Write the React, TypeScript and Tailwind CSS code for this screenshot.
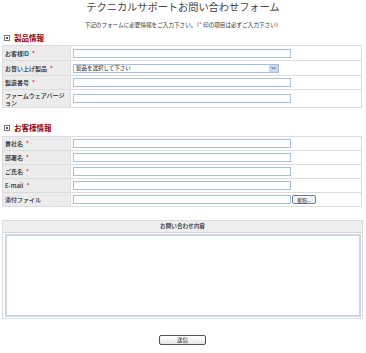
const jp = "font-['Noto_Sans_CJK_JP','Noto_Sans',sans-serif]";

function Req() {
  return <span className="ml-[3px] text-[#e02020]">*</span>;
}

function SectionHead({ title, className }: { title: string; className?: string }) {
  return (
    <div className={`flex h-[9px] items-center pl-[4px] ${className ?? ""}`}>
      <span className="relative mr-[4px] h-[6px] w-[6px] border border-[#777] bg-white">
        <span className="absolute left-[1px] top-[1px] h-[2px] w-[2px] bg-[#555]" />
      </span>
      <span className="text-[7.5px] font-bold leading-[9px] text-[#8c0000]">{title}</span>
    </div>
  );
}

function TextInput({ w = "w-[218px]" }: { w?: string }) {
  return <div className={`h-[9px] ${w} border border-[#a9bdd6] bg-white`} />;
}

function Row({ label, req, h, children }: { label: string; req?: boolean; h: string; children: React.ReactNode }) {
  return (
    <div className={`grid ${h} grid-cols-[67px_1fr] border-b border-[#dcdcdc]`}>
      <div className="flex items-center bg-[#ececec] px-[2px] text-[6px] font-medium leading-[7px] text-[#222]">
        <span>
          {label}
          {req && <Req />}
        </span>
      </div>
      <div className="flex items-center border-l border-[#dcdcdc] pl-[2px]">{children}</div>
    </div>
  );
}

export default function App() {
  return (
    <div className={`h-[353px] w-[366px] overflow-hidden bg-white ${jp} text-[#333]`}>
      <h1 className="mt-[1px] h-[12px] text-center text-[10.2px] leading-[12px] text-[#444]">
        テクニカルサポートお問い合わせフォーム
      </h1>
      <p className="mt-[8px] h-[8px] text-center text-[5.6px] leading-[8px] text-[#333]">
        下記のフォームに必要情報をご入力下さい。（<span className="text-[#e02020]">*</span> 印の項目は必ずご入力下さい）
      </p>

      <SectionHead title="製品情報" className="mt-[4px]" />
      <div className="mx-[2px] mt-[3px] w-[360px] border-t border-x border-[#dcdcdc]">
        <Row label="お客様ID" req h="h-[15px]">
          <TextInput />
        </Row>
        <Row label="お買い上げ製品" req h="h-[15px]">
          <div className="flex h-[9px] w-[206px] items-center border border-[#a9bdd6] bg-white">
            <span className="flex-1 pl-[2px] text-[5.5px] leading-[7px] text-[#222]">製品を選択して下さい</span>
            <span className="flex h-full w-[9px] items-center justify-center bg-[#c9d8ee]">
              <svg width="5" height="4" viewBox="0 0 5 4">
                <path d="M0.5 1 L2.5 3 L4.5 1" fill="none" stroke="#4a5f80" strokeWidth="1" />
              </svg>
            </span>
          </div>
        </Row>
        <Row label="製造番号" req h="h-[14px]">
          <TextInput />
        </Row>
        <Row label="ファームウェアバージョン" h="h-[18px]">
          <TextInput />
        </Row>
      </div>

      <SectionHead title="お客様情報" className="mt-[15px]" />
      <div className="mx-[2px] mt-[4px] w-[360px] border-t border-x border-[#dcdcdc]">
        <Row label="貴社名" req h="h-[14px]">
          <TextInput />
        </Row>
        <Row label="部署名" req h="h-[14px]">
          <TextInput />
        </Row>
        <Row label="ご氏名" req h="h-[14px]">
          <TextInput />
        </Row>
        <Row label="E-mail" req h="h-[14px]">
          <TextInput />
        </Row>
        <Row label="添付ファイル" h="h-[14px]">
          <TextInput />
          <div className="ml-[1px] flex h-[9px] w-[24px] items-center justify-center rounded-[2px] border border-[#6b7c93] bg-[#f2f4f7] text-[5px] leading-[6px] text-[#222]">
            参照...
          </div>
        </Row>
      </div>

      <div className="mx-[2px] mt-[13px] w-[361px] border border-[#dcdcdc]">
        <div className="flex h-[12px] items-center justify-center border-b border-[#d4d4d4] bg-[#eeeeee] text-[5.6px] font-medium leading-[7px] text-[#222]">
          お問い合わせ内容
        </div>
        <div className="pb-[1px] pl-[2px] pr-[1px] pt-[1px]">
          <div className="h-[83px] border-2 border-[#c9d7e8] bg-white" />
        </div>
      </div>

      <div className="mt-[16px] flex justify-center">
        <div className="-ml-[1px] flex h-[10px] w-[47px] items-center justify-center rounded-[2px] border border-[#555] bg-gradient-to-b from-white to-[#e6e6e6] text-[5.5px] leading-[7px] text-[#222]">
          送信
        </div>
      </div>
    </div>
  );
}
